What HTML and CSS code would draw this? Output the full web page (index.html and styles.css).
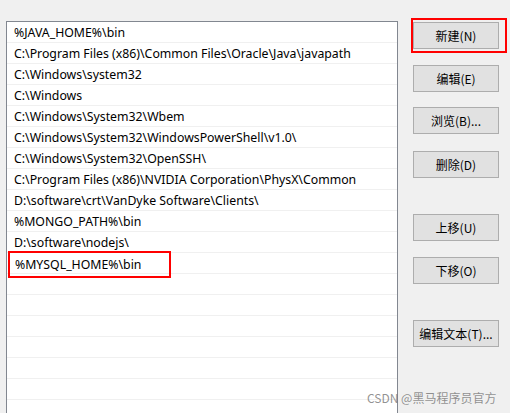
FILE: index.html
```html
<!DOCTYPE html>
<html lang="zh-CN">
<head>
<meta charset="utf-8">
<link rel="stylesheet" href="styles.css">
</head>
<body>
<div class="dialog">
  <div class="list">
    <div class="row">%JAVA_HOME%\bin</div>
    <div class="row">C:\Program Files (x86)\Common Files\Oracle\Java\javapath</div>
    <div class="row">C:\Windows\system32</div>
    <div class="row">C:\Windows</div>
    <div class="row">C:\Windows\System32\Wbem</div>
    <div class="row">C:\Windows\System32\WindowsPowerShell\v1.0\</div>
    <div class="row">C:\Windows\System32\OpenSSH\</div>
    <div class="row">C:\Program Files (x86)\NVIDIA Corporation\PhysX\Common</div>
    <div class="row">D:\software\crt\VanDyke Software\Clients\</div>
    <div class="row">%MONGO_PATH%\bin</div>
    <div class="row">D:\software\nodejs\</div>
    <div class="row"><span class="mark">%MYSQL_HOME%\bin</span></div>
    <div class="row"></div>
    <div class="row"></div>
    <div class="row"></div>
    <div class="row"></div>
    <div class="row"></div>
    <div class="row"></div>
    <div class="row"></div>
  </div>
  <div class="buttons">
    <div class="btn-wrap highlight"><button class="btn">新建(N)</button></div>
    <button class="btn b-edit">编辑(E)</button>
    <button class="btn b-browse">浏览(B)...</button>
    <button class="btn b-del">删除(D)</button>
    <button class="btn">上移(U)</button>
    <button class="btn b-down">下移(O)</button>
    <button class="btn">编辑文本(T)...</button>
  </div>
</div>
<div class="watermark">CSDN @黑马程序员官方</div>
</body>
</html>
```
FILE: styles.css
```css
html, body {
  margin: 0;
  padding: 0;
  background: #f0f0f0;
  overflow: hidden;
  height: 413px;
  font-family: "Noto Sans", "Noto Sans CJK SC", sans-serif;
  font-size: 12.3px;
  color: #000;
}
.dialog {
  display: flex;
  align-items: flex-start;
  padding: 21px 0 0 6px;
}
.list {
  width: 390px;
  height: 391px;
  background: #fff;
  border: 1px solid #828790;
  border-bottom: none;
  overflow: hidden;
}
.row {
  position: relative;
  height: 19px;
  padding-top: 1px;
  line-height: 20px;
  border-bottom: 1px solid #f0f0f0;
  padding-left: 7px;
  white-space: nowrap;
}
.mark {
  position: absolute;
  left: 1px;
  top: -2px;
  width: 154px;
  height: 22px;
  border: 2px solid #f00;
  padding-left: 5px;
  padding-top: 1px;
  line-height: 22px;
}
.buttons {
  display: flex;
  flex-direction: column;
  margin-left: 14px;
  padding-top: 1px;
}
.btn {
  width: 86px;
  height: 27px;
  margin: 0 0 16px 1px;
  background: #e1e1e1;
  border: 1px solid #adadad;
  font-family: "Noto Sans CJK SC", "Noto Sans", sans-serif;
  font-size: 12px;
  color: #000;
  padding: 0;
  box-sizing: border-box;
}
.b-edit { margin-bottom: 15px; }
.b-browse { margin-bottom: 17px; }
.b-del { margin-bottom: 36px; }
.b-down { margin-bottom: 36px; }
.highlight {
  position: relative;
  margin-bottom: 16px;
}
.highlight .btn {
  margin-bottom: 0;
}
.highlight::after {
  content: "";
  position: absolute;
  left: -1px;
  top: -4px;
  width: 92px;
  height: 31px;
  border: 2px solid #f00;
}
.watermark {
  position: absolute;
  left: 367px;
  top: 389px;
  font-family: "Noto Sans CJK SC", sans-serif;
  font-size: 12px;
  color: rgba(110, 110, 110, 0.75);
}
```
